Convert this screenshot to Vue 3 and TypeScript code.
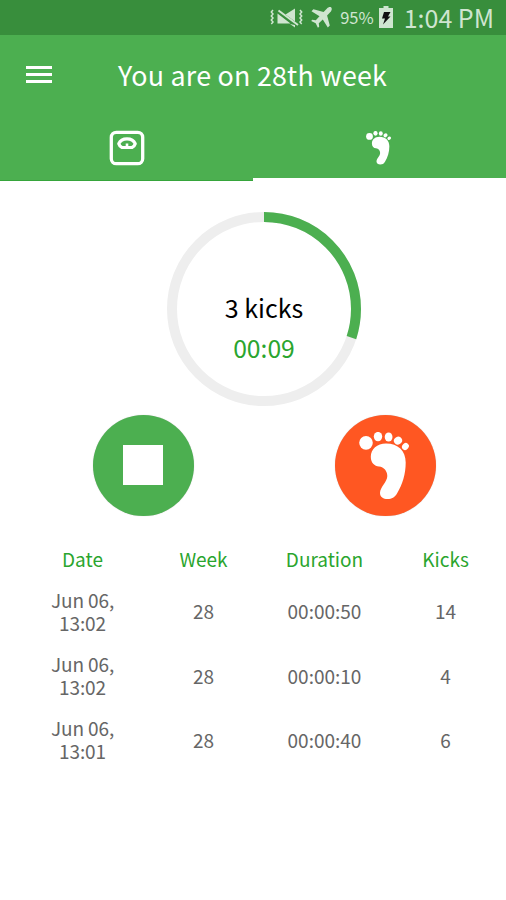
<script setup lang="ts">
import { computed, defineComponent, h } from 'vue'

interface Session {
  day: string
  time: string
  week: number
  duration: string
  kicks: number
}

const columns: string[] = ['Date', 'Week', 'Duration', 'Kicks']

const sessions: Session[] = [
  { day: 'Jun 06,', time: '13:02', week: 28, duration: '00:00:50', kicks: 14 },
  { day: 'Jun 06,', time: '13:02', week: 28, duration: '00:00:10', kicks: 4 },
  { day: 'Jun 06,', time: '13:01', week: 28, duration: '00:00:40', kicks: 6 },
]

const kicks = 3
const goal = 10
const circumference = 2 * Math.PI * 92
const dash = computed(() => `${(circumference * kicks) / goal} ${circumference}`)

const FootIcon = defineComponent({
  render: () =>
    h('svg', { viewBox: '34 27 50 68', fill: '#fff' }, [
      h('ellipse', { cx: 41, cy: 37.8, rx: 6.8, ry: 6.9 }),
      h('ellipse', { cx: 53, cy: 31.6, rx: 4.2, ry: 4.7 }),
      h('ellipse', { cx: 63.6, cy: 32, rx: 3.9, ry: 4.5 }),
      h('ellipse', { cx: 73, cy: 35.6, rx: 4.2, ry: 3.8, transform: 'rotate(-35 73 35.6)' }),
      h('ellipse', { cx: 80.4, cy: 41.5, rx: 3.7, ry: 3.2, transform: 'rotate(-50 80.4 41.5)' }),
      h('path', {
        d: 'M61 38.4C52 38.4 45.8 44 45.8 51.8C45.8 58 49.5 61 54 61.6C59 62.2 62.3 66 62.3 71C62.3 77 55 82 55 88C55 92 58.5 94 62.5 94C67 94 69.5 92.5 72 88.5C77.5 79.5 80.7 69 80.7 57.5C80.7 45.5 73 38.4 61 38.4Z',
      }),
    ]),
})
</script>

<template>
  <div class="screen">
    <div class="status">
      <svg class="mute" viewBox="0 0 34 20" fill="none" stroke="#cfe5d0">
        <path d="M3 2l-1.7 2 1.7 2-1.7 2 1.7 2-1.7 2 1.7 2-1.7 2M30 2l1.7 2-1.7 2 1.7 2-1.7 2 1.7 2-1.7 2 1.7 2" stroke-width="1.5" />
        <path d="M15.5 6.5L25 .5V13.5zM7.5 5.5L20.5 15.5H7.500zM20 16l5 3.500V17z" fill="#cfe5d0" stroke="none" />
        <path d="M8.5 2.5L28 17" stroke-width="2" />
      </svg>
      <svg class="plane" viewBox="0 0 21 21" fill="#cfe5d0">
        <path d="M20.3.5C19-.4 17.3.2 16 1.5L12.6 4.9 2.4 2.2.5 4.2l8 5-3.7 4-3.6-.4L.2 14l4.500 2.200L6.900 20.800l1.300-1.100-.4-3.500 4-3.700 5 8 2-1.900L16.100 8.400 19.400 5C20.700 3.700 21.200 1.600 20.300.5z" />
      </svg>
      <span class="percent">95%</span>
      <svg class="battery" viewBox="0 0 14 22">
        <path d="M4.500 0h5v2H14v20H0V2h4.500z" fill="#cfe5d0" />
        <path d="M5 6h6.500L9 10.500h2.500L4 18.500l2-6H3z" fill="#101010" />
      </svg>
      <span class="clock">1:04 PM</span>
    </div>

    <header class="bar">
      <svg class="menu" viewBox="0 0 26 18" fill="#fff">
        <path d="M0 0h26v3H0zM0 7h26v3H0zM0 14h26v3H0z" />
      </svg>
      <h1>You are on 28th week</h1>
    </header>

    <nav class="tabs">
      <div class="tab">
        <svg class="scale" viewBox="0 0 36 36" fill="none" stroke="#fff">
          <rect x="2.300" y="2.300" width="31.400" height="31.400" rx="5" stroke-width="3.300" />
          <path d="M13 17.500H23Q25.400 16.500 26.200 13.700C23.500 7.300 12.500 7.300 9.800 13.700Q10.600 16.500 13 17.500Z" stroke-width="3.200" stroke-linejoin="round" />
          <path d="M18 17.500v-4" stroke-width="2.600" />
        </svg>
      </div>
      <div class="tab active"><FootIcon class="foot-small" /></div>
    </nav>

    <main>
      <div class="ring">
        <svg class="dial" viewBox="0 0 194 194" fill="none" stroke-width="10">
          <circle cx="97" cy="97" r="92" stroke="#eee" />
          <circle cx="97" cy="97" r="92" stroke="#4caf50" :stroke-dasharray="dash" transform="rotate(-90 97 97)" />
        </svg>
        <div class="count">{{ kicks }} kicks</div>
        <div class="timer">00:09</div>
      </div>

      <div class="actions">
        <button class="round stop" aria-label="Stop"><span class="square"></span></button>
        <button class="round kick" aria-label="Kick"><FootIcon class="foot-large" /></button>
      </div>

      <div class="row head">
        <div v-for="c in columns" :key="c">{{ c }}</div>
      </div>
      <div v-for="(s, i) in sessions" :key="i" class="row">
        <div class="date">{{ s.day }} {{ s.time }}</div>
        <div>{{ s.week }}</div>
        <div>{{ s.duration }}</div>
        <div>{{ s.kicks }}</div>
      </div>
    </main>
  </div>
</template>

<style>
body {
  margin: 0;
  background: #fff;
}
</style>

<style scoped>
.screen {
  width: 506px;
  height: 900px;
  overflow: hidden;
  background: #fff;
  font-family: 'Noto Sans CJK SC', 'Noto Sans', sans-serif;
}
.status {
  display: flex;
  align-items: center;
  justify-content: flex-end;
  box-sizing: border-box;
  height: 35px;
  padding-right: 12px;
  background: #388e3c;
  color: #cfe5d0;
  white-space: nowrap;
}
.mute {
  width: 34px;
  height: 20px;
  margin-right: 7px;
}
.plane {
  width: 21px;
  height: 21px;
  margin-right: 8px;
}
.percent {
  font-size: 16.5px;
  line-height: 35px;
  margin-right: 5px;
}
.battery {
  width: 14px;
  height: 22px;
  margin: 0 11px 1px 0;
}
.clock {
  font-size: 25px;
  line-height: 35px;
}
.bar {
  display: flex;
  align-items: center;
  height: 80px;
  padding-left: 26px;
  background: #4caf50;
}
.menu {
  width: 26px;
  height: 18px;
}
h1 {
  margin: 0 0 1px 66px;
  color: #fff;
  font-size: 26.8px;
  font-weight: 400;
  line-height: 39px;
  letter-spacing: 0.25px;
  white-space: nowrap;
}
.tabs {
  display: grid;
  grid-template-columns: 1fr 1fr;
  height: 66px;
  background: #4caf50;
}
.tab {
  display: flex;
  justify-content: center;
  box-sizing: border-box;
  padding-top: 15px;
  border-bottom: 1px solid #36a53b;
}
.tab.active {
  padding-top: 16px;
  padding-right: 2px;
  border-bottom: 3px solid #fff;
}
.scale {
  width: 36px;
  height: 36px;
}
.foot-small {
  width: 25px;
  height: 34px;
}
main {
  padding: 31px 0 0 22px;
}
.ring {
  display: grid;
  justify-items: center;
  align-content: start;
  grid-template-columns: 194px;
  justify-content: center;
  grid-template-rows: 75px 40px 40px 39px;
  width: 484px;
}
.dial {
  grid-area: 1 / 1 / 5 / 2;
  width: 194px;
  height: 194px;
}
.count {
  grid-area: 2 / 1;
  font-size: 25px;
  line-height: 40px;
}
.timer {
  grid-area: 3 / 1;
  color: #2aa52e;
  font-size: 24.7px;
  line-height: 40px;
}
.actions {
  display: grid;
  grid-template-columns: 242px 242px;
  justify-items: center;
  margin-top: 9px;
}
.round {
  display: flex;
  align-items: center;
  justify-content: center;
  width: 101px;
  height: 101px;
  padding: 0;
  border: 0;
  border-radius: 50%;
  box-shadow: 0 0 1px rgba(0, 0, 0, 0.25);
}
.stop {
  background: #4caf50;
}
.kick {
  background: #ff5722;
}
.square {
  width: 40px;
  height: 40px;
  margin-bottom: 1px;
  background: #fff;
}
.foot-large {
  width: 50px;
  height: 68px;
  margin-right: 2px;
}
.row {
  display: grid;
  grid-template-columns: repeat(4, 121px);
  align-items: center;
  height: 64.2px;
  color: #666;
  font-size: 19px;
  line-height: 23.5px;
  text-align: center;
}
.date {
  padding: 0 25px;
  letter-spacing: -0.1px;
}
.head {
  height: 40px;
  margin-top: 23px;
  color: #2aa52e;
}
</style>
